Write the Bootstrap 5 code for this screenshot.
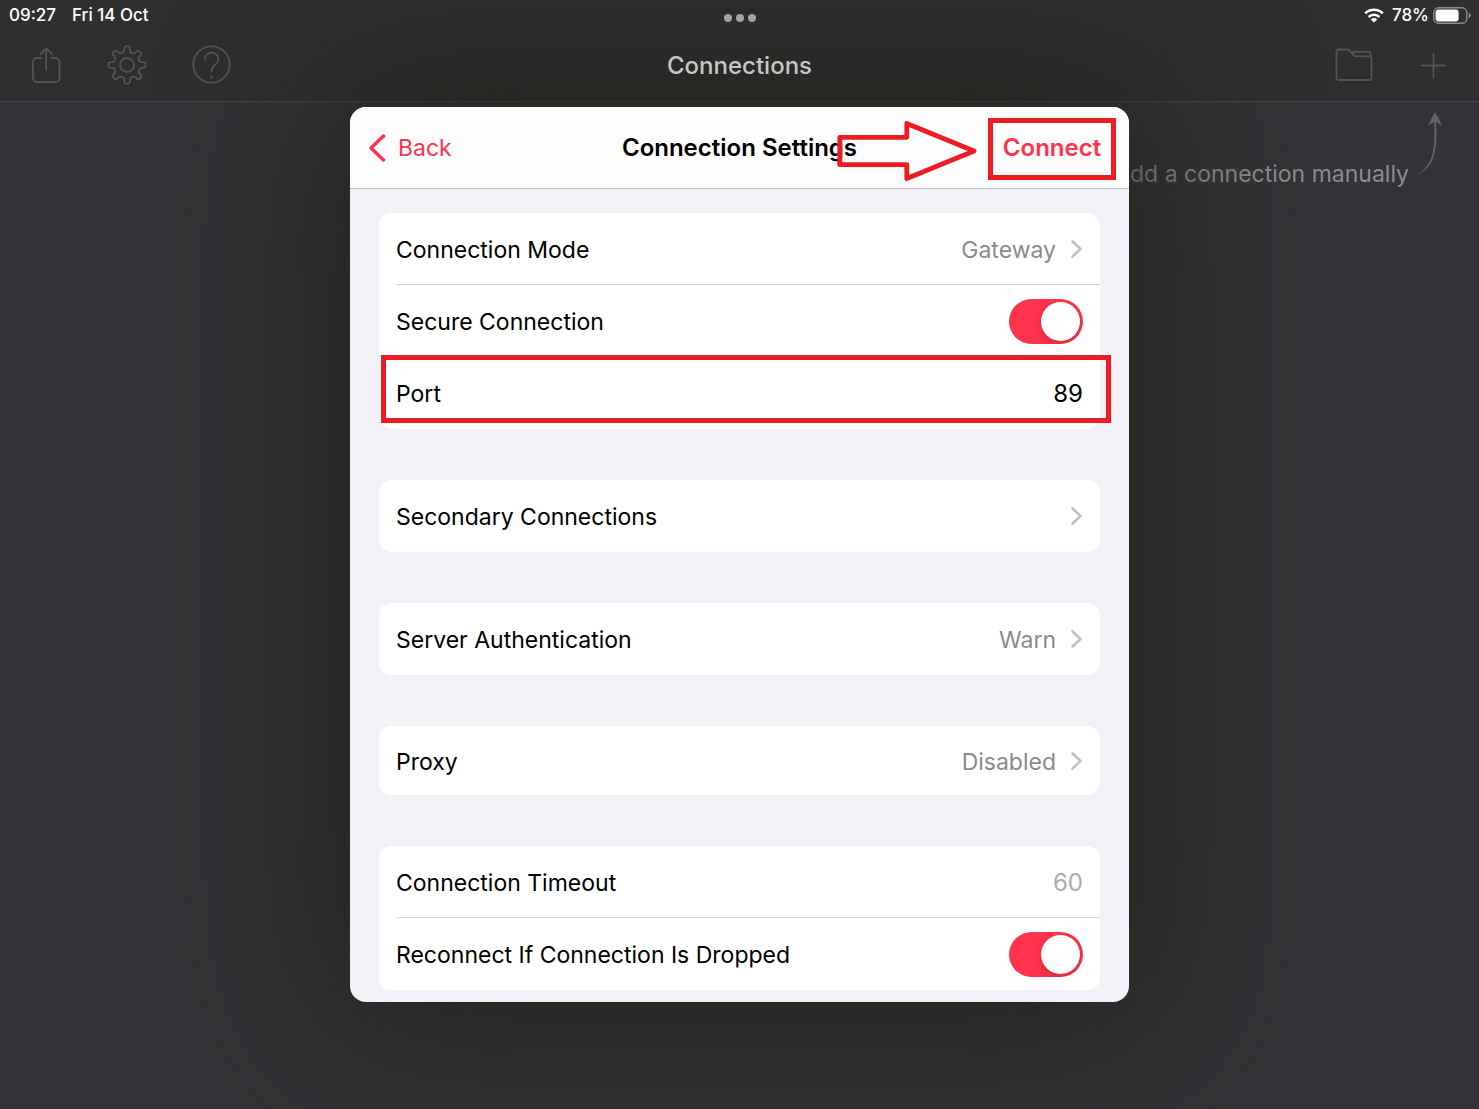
<!DOCTYPE html>
<html lang="en">
<head>
<meta charset="utf-8">
<meta name="viewport" content="width=device-width, initial-scale=1">
<title>Connections</title>
<link href="https://cdn.jsdelivr.net/npm/bootstrap@5.3.0/dist/css/bootstrap.min.css" rel="stylesheet">
<style>
:root { --accent: #ff334b; --callout: #ed1c24; --line: #48484a; --icon: #545455; }
body { font-family: Inter, "Liberation Sans", sans-serif; font-size: 23px; line-height: 32px; background: #343236; color: #000; min-height: 100vh; overflow: hidden; }
.app-head { background: #2f2f30; border-bottom: 1px solid var(--line); }
.above { z-index: 1; }
.status-row { height: 30px; padding: 0 8px 0 9px; font-size: 17px; line-height: 30px; font-weight: 500; color: #fff; }
.dots { left: 50%; top: 14px; transform: translateX(-50%); }
.app-bar { height: 71px; padding: 0 32px 2px 30px; }
.side { flex: 1 1 0; }
.app-title { font-size: 24px; font-weight: 500; line-height: 32px; color: #c6c6c4; padding: 2px 0 0 2px; }
.tools-left { gap: 45px; }
.tools-right { gap: 46px; }
.tool { background: none; border: 0; padding: 0; color: var(--icon); line-height: 0; }
.tool svg { fill: none; stroke: currentColor; stroke-width: 1.8; stroke-linejoin: round; stroke-linecap: round; }
.hint { padding: 8px 36px 0 0; color: #8d8c8f; }
.hint-text { padding-top: 48px; }
.overlay { inset: 0; padding-top: 107px; }
.dialog { width: 779px; max-width: 100%; }
.sheet { background: #f2f1f7; border-radius: 16px; box-shadow: 0 0 160px 20px rgba(31, 34, 24, .85); }
.sheet-head { height: 82px; padding: 0 13px; background: #fcfcfd; border-bottom: 1px solid #bdbdc0; border-radius: 16px 16px 0 0; }
.sheet-title { font-size: 24px; font-weight: 600; line-height: 32px; }
.plain { background: none; border: 0; color: var(--accent); }
.back { gap: 12px; padding: 0 6px; }
.connect { font-size: 24px; font-weight: 600; height: 62px; width: 128px; padding: 0 0 2px; margin-top: 2px; border: 5px solid var(--callout); }
.arrow { left: 487px; top: 13px; }
.sheet-body { padding: 24px 29px 12px; gap: 51px; }
.group { --bs-list-group-border-width: 0; --bs-list-group-border-radius: 12px; background: #fff; border-radius: 12px; }
.item { height: 72px; padding: 2px 17px 0; background: transparent; color: #000; }
.item.compact { height: 69px; }
.ruled::after { content: ""; position: absolute; left: 17px; right: 0; bottom: 0; height: 1px; background: #d6d6d9; }
.value { color: #8a8a8e; }
.chev { margin-left: 14px; margin-bottom: 2px; }
.num { width: 160px; border: 0; padding: 0; background: transparent; text-align: right; color: #000; font-size: 24px; }
.num::placeholder { color: #acacae; opacity: 1; }
.num:focus { outline: 0; }
.callout-box { inset: -2px -11px 6px 2px; border: 5px solid var(--callout); pointer-events: none; }
.form-check-input.toggle { width: 74px; height: 45px; margin: 0 0 2px; border: 0; border-radius: 23px; background: #e9e9eb; position: relative; overflow: hidden; }
.form-check-input.toggle:checked { background: var(--accent); }
.toggle::after { content: ""; position: absolute; top: 3px; left: 3px; width: 39px; height: 39px; border-radius: 50%; background: #fff; box-shadow: 0 3px 8px rgba(0, 0, 0, .18); }
.toggle:checked::after { left: 32px; }
</style>
<script src="https://cdn.jsdelivr.net/npm/bootstrap@5.3.0/dist/js/bootstrap.bundle.min.js"></script>
</head>
<body class="position-relative">
<header class="app-head">
  <div class="status-row above d-flex justify-content-between position-relative">
    <div class="d-flex gap-3"><span>09:27</span><span>Fri 14 Oct</span></div>
    <svg class="dots position-absolute" width="32" height="8" fill="#a2a2a2"><circle cx="4" cy="4" r="4"/><circle cx="16" cy="4" r="4"/><circle cx="28" cy="4" r="4"/></svg>
    <div class="d-flex align-items-center">
      <svg class="me-2" width="20" height="15" viewBox="0 0 20 15" fill="none" stroke="#fff" stroke-width="2.6"><path d="M1.2 5.4a12.6 12.6 0 0 1 17.6 0M4.5 9a7.9 7.9 0 0 1 11 0"/><path d="M10 14.6 6.8 11.4a4.6 4.6 0 0 1 6.4 0z" fill="#fff" stroke="none"/></svg>
      <span class="me-1">78%</span>
      <svg width="38" height="17" viewBox="0 0 38 17"><rect x=".8" y=".8" width="33" height="15.4" rx="4.6" fill="none" stroke="#8b8b8b" stroke-width="1.4"/><rect x="2.6" y="2.6" width="23" height="11.8" rx="2.8" fill="#fff"/><path d="M35.6 5.8q2.2.8 2.2 2.7t-2.2 2.7z" fill="#8b8b8b"/></svg>
    </div>
  </div>
  <nav class="app-bar above d-flex align-items-center position-relative">
    <div class="side tools-left d-flex align-items-center">
      <button class="tool" aria-label="Share"><svg width="32" height="38" viewBox="0 0 32 38"><path d="M11 12H7a4 4 0 0 0-4 4v16a4 4 0 0 0 4 4h18.500a4 4 0 0 0 4-4V16a4 4 0 0 0-4-4h-4M16.200 23.500V2.500M10.500 8l5.700-5.700L22 8"/></svg></button>
      <button class="tool" aria-label="Settings"><svg width="40" height="40" viewBox="0 0 40 40"><circle cx="20" cy="20" r="7"/><path id="gear"/></svg></button>
      <button class="tool" aria-label="Help"><svg width="40" height="40" viewBox="0 0 40 40"><circle cx="19.500" cy="19.500" r="18.200"/><path d="M13 14.500C13 5.500 26.300 5.500 26.300 14c0 6-6.800 6-6.800 12"/><circle cx="19.500" cy="32" r=".6"/></svg></button>
    </div>
    <h1 class="app-title m-0">Connections</h1>
    <div class="side tools-right d-flex align-items-center justify-content-end">
      <button class="tool" aria-label="New folder"><svg width="38" height="34" viewBox="0 0 38 34"><path d="M1.500 3.500a2 2 0 0 1 2-2h9q1.500 0 2.500 1.200l3.700 4.600q.9 1 2.300 1H34.500a2 2 0 0 1 2 2V30a2 2 0 0 1-2 2H3.500a2 2 0 0 1-2-2zM15 3.800h18.500a2 2 0 0 1 2 2v2.800"/></svg></button>
      <button class="tool" aria-label="Add"><svg width="28" height="28" viewBox="0 0 28 28"><path d="M14.500 2.500v24M2.500 14.500h24"/></svg></button>
    </div>
  </nav>
</header>
<main>
  <div class="hint d-flex justify-content-end">
    <span class="hint-text">Add a connection manually</span>
    <svg class="ms-2" width="26" height="70" viewBox="0 0 26 70" fill="#626164"><path d="M18 2 25.600 16l-6.600-4.200c.5 10 1 23-1.500 32C15 54 9 61 .5 65.500 8 60 13.500 52.500 15.600 43.500c2-9 1.900-21 1.600-31.800L10.500 16z"/></svg>
  </div>
</main>
<div class="overlay position-absolute d-flex justify-content-center align-items-start">
  <section class="dialog" role="dialog" aria-labelledby="dlg-title">
    <div class="sheet">
      <div class="sheet-head d-flex align-items-center position-relative">
        <div class="side d-flex"><button class="plain back d-flex align-items-center"><svg width="17" height="28" viewBox="0 0 17 28" fill="none" stroke="currentColor" stroke-width="3.400" stroke-linecap="round" stroke-linejoin="round"><path d="M14.500 2 2 14l12.500 12"/></svg><span>Back</span></button></div>
        <h2 class="sheet-title m-0" id="dlg-title">Connection Settings</h2>
        <div class="side d-flex justify-content-end"><button class="plain connect">Connect</button></div>
        <svg class="arrow position-absolute" width="142" height="62" viewBox="0 0 142 62" fill="none" stroke="#ed1c24" stroke-width="4.800" stroke-linejoin="round"><path d="M2.800 17.300h67V3.500L137 31 69.800 58.500V44.700h-67z"/></svg>
      </div>
      <div class="sheet-body d-flex flex-column">
        <div class="list-group group">
          <button class="list-group-item list-group-item-action item ruled d-flex align-items-center"><span class="me-auto">Connection Mode</span><span class="value">Gateway</span><svg class="chev" width="13" height="20" viewBox="0 0 13 20" fill="none" stroke="#c0c0c3" stroke-width="2.600" stroke-linecap="round" stroke-linejoin="round"><path d="M2.500 2.500 10.500 10l-8 7.500"/></svg></button>
          <div class="list-group-item item d-flex align-items-center"><label class="me-auto" for="secure">Secure Connection</label><input class="form-check-input toggle" type="checkbox" role="switch" id="secure" checked></div>
          <div class="list-group-item item d-flex align-items-center"><label class="me-auto" for="port">Port</label><input class="num" type="text" id="port" value="89"><span class="callout-box position-absolute"></span></div>
        </div>
        <div class="list-group group">
          <button class="list-group-item list-group-item-action item d-flex align-items-center"><span class="me-auto">Secondary Connections</span><svg class="chev" width="13" height="20" viewBox="0 0 13 20" fill="none" stroke="#c0c0c3" stroke-width="2.600" stroke-linecap="round" stroke-linejoin="round"><path d="M2.500 2.500 10.500 10l-8 7.500"/></svg></button>
        </div>
        <div class="list-group group">
          <button class="list-group-item list-group-item-action item d-flex align-items-center"><span class="me-auto">Server Authentication</span><span class="value">Warn</span><svg class="chev" width="13" height="20" viewBox="0 0 13 20" fill="none" stroke="#c0c0c3" stroke-width="2.600" stroke-linecap="round" stroke-linejoin="round"><path d="M2.500 2.500 10.500 10l-8 7.500"/></svg></button>
        </div>
        <div class="list-group group">
          <button class="list-group-item list-group-item-action item compact d-flex align-items-center"><span class="me-auto">Proxy</span><span class="value">Disabled</span><svg class="chev" width="13" height="20" viewBox="0 0 13 20" fill="none" stroke="#c0c0c3" stroke-width="2.600" stroke-linecap="round" stroke-linejoin="round"><path d="M2.500 2.500 10.500 10l-8 7.500"/></svg></button>
        </div>
        <div class="list-group group">
          <div class="list-group-item item ruled d-flex align-items-center"><label class="me-auto" for="timeout">Connection Timeout</label><input class="num" type="text" id="timeout" placeholder="60"></div>
          <div class="list-group-item item d-flex align-items-center"><label class="me-auto" for="reconnect">Reconnect If Connection Is Dropped</label><input class="form-check-input toggle" type="checkbox" role="switch" id="reconnect" checked></div>
        </div>
      </div>
    </div>
  </section>
</div>
<script>
// Eight-toothed cog outline, centred on 20,20
var p = [];
for (var i = 0; i < 8; i++) {
  var a = i * Math.PI / 4;
  [[-.36, 13], [-.24, 13.6], [-.19, 15], [-.15, 17.6], [-.08, 18.6], [.08, 18.6], [.15, 17.6], [.19, 15], [.24, 13.6], [.36, 13]].forEach(function (q) {
    p.push((20 + q[1] * Math.sin(a + q[0])).toFixed(2) + " " + (20 - q[1] * Math.cos(a + q[0])).toFixed(2));
  });
}
document.getElementById("gear").setAttribute("d", "M" + p.join("L") + "Z");
</script>
</body>
</html>
